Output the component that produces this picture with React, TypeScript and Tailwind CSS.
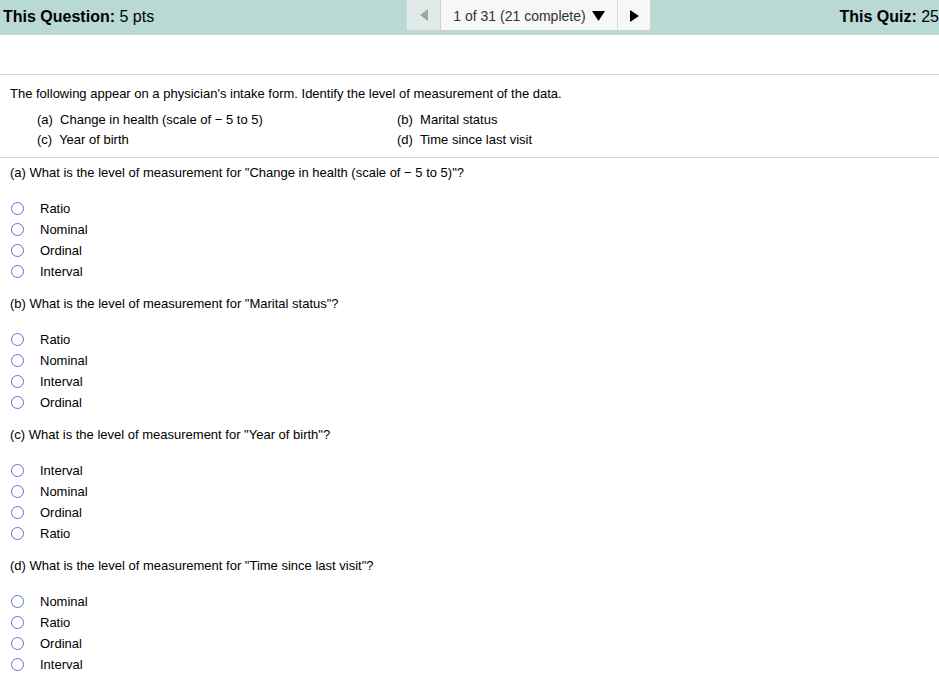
const questions = [
  {
    label: "(a)",
    text: 'What is the level of measurement for "Change in health (scale of \u2212 5 to 5)"?',
    options: ["Ratio", "Nominal", "Ordinal", "Interval"],
  },
  {
    label: "(b)",
    text: 'What is the level of measurement for "Marital status"?',
    options: ["Ratio", "Nominal", "Interval", "Ordinal"],
  },
  {
    label: "(c)",
    text: 'What is the level of measurement for "Year of birth"?',
    options: ["Interval", "Nominal", "Ordinal", "Ratio"],
  },
  {
    label: "(d)",
    text: 'What is the level of measurement for "Time since last visit"?',
    options: ["Nominal", "Ratio", "Ordinal", "Interval"],
  },
];

const Radio = () => (
  <span className="inline-block h-[13px] w-[13px] rounded-full border border-[#5b6fd6] bg-white" />
);

export default function App() {
  return (
    <div className="w-[939px] h-[700px] overflow-hidden bg-white text-black font-['Liberation_Sans',Arial,sans-serif]">
      {/* Header bar */}
      <div className="flex h-[35px] items-start bg-[#b9d9d5]">
        <div className="w-[406px] pl-[3px] pt-[8px] text-[16px] leading-[18px]">
          <b>This Question:</b> 5 pts
        </div>
        <div className="flex h-[31px] w-[245px] rounded-b-[3px] border border-t-0 border-[#c9d6d4] bg-[#f7f7f7]">
          <div className="flex w-[34px] items-center justify-center bg-[#e0eae9] border-r border-[#c9d6d4]">
            <svg width="9" height="12" viewBox="0 0 9 12">
              <polygon points="9,0 9,12 1,6" fill="#9aa6a4" />
            </svg>
          </div>
          <div className="flex w-[177px] items-center justify-center gap-[6px] pt-[2px] border-r border-[#d8e0df] text-[14px] text-[#333]">
            <span>1 of 31 (21 complete)</span>
            <svg width="13" height="10" viewBox="0 0 13 10">
              <polygon points="0,0 13,0 6.5,10" fill="#000" />
            </svg>
          </div>
          <div className="flex flex-1 items-center justify-center pt-[2px]">
            <svg width="9" height="12" viewBox="0 0 9 12">
              <polygon points="0,0 0,12 9,6" fill="#000" />
            </svg>
          </div>
        </div>
        <div className="flex-1 pt-[8px] text-[16px] leading-[18px] whitespace-nowrap overflow-hidden text-right">
          <b>This Quiz:</b> 25
        </div>
      </div>

      {/* Question stem */}
      <div className="mt-[39px] border-t border-[#d3d6de]" />
      <div className="pl-[10px] pt-[11px] text-[13px] leading-[15px]">
        The following appear on a physician's intake form. Identify the level of measurement of the data.
      </div>
      <div className="grid grid-cols-[360px_1fr] pl-[37px] pt-[9px] text-[13px] leading-[20px]">
        <div>(a)&nbsp; Change in health (scale of &minus; 5 to 5)</div>
        <div>(b)&nbsp; Marital status</div>
        <div>(c)&nbsp; Year of birth</div>
        <div>(d)&nbsp; Time since last visit</div>
      </div>
      <div className="mt-[7px] border-t border-[#d3d6de]" />

      {/* Parts */}
      <div className="flex flex-col pl-[10px]">
        {questions.map((q, i) => (
          <div key={q.label} className={i === 0 ? "pt-[7px]" : "pt-[14px]"}>
            <div className="text-[13px] leading-[15px]">
              {q.label} {q.text}
            </div>
            <div className="flex flex-col pt-[18px]">
              {q.options.map(opt => (
                <div key={opt} className="flex h-[21px] items-center text-[13px]">
                  <span className="flex w-[30px] items-center pl-[1px]">
                    <Radio />
                  </span>
                  <span>{opt}</span>
                </div>
              ))}
            </div>
          </div>
        ))}
      </div>
    </div>
  );
}
